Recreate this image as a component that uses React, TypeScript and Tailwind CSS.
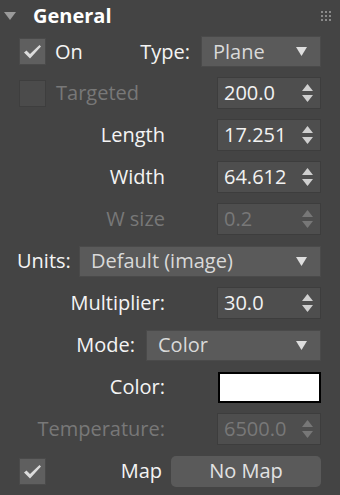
const FONT = { fontFamily: '"Open Sans", "Noto Sans", sans-serif' };

function Check({ disabled = false, checked = true }: { disabled?: boolean; checked?: boolean }) {
  return (
    <div
      className={`flex h-[27px] w-[27px] shrink-0 items-center justify-center border ${
        disabled ? "border-[#3e3e3e] bg-[#4b4b4b]" : "border-[#4a4a4a] bg-[#5f5f5f]"
      }`}
    >
      {checked && (
        <svg width="19" height="15" viewBox="0 0 19 15">
          <path d="M1 8.5 L3.5 6.5 L7 10 L16.5 1 L18 2.5 L7 14.5 Z" fill="#dcdcdc" />
        </svg>
      )}
    </div>
  );
}

function Arrow() {
  return (
    <svg width="11" height="9" viewBox="0 0 11 9" className="shrink-0">
      <path d="M0 0 H11 L5.5 9 Z" fill="#dedede" />
    </svg>
  );
}

function Spinner({ value, disabled = false }: { value: string; disabled?: boolean }) {
  return (
    <div className="ml-auto flex h-[32px] w-[104px] items-center border border-[#3d3d3d] bg-[#4e4e4e] pl-[6px] pr-[7px]">
      <span className={`flex-1 ${disabled ? "text-[#787878]" : "text-[#f2f2f2]"}`}>{value}</span>
      <svg width="11" height="19" viewBox="0 0 11 19" className="shrink-0">
        <path d="M0 7 L5.5 0 L11 7 Z" fill={disabled ? "#777777" : "#cfcfcf"} />
        <path d="M0 11 H11 L5.5 18 Z" fill={disabled ? "#777777" : "#cfcfcf"} />
      </svg>
    </div>
  );
}

function Dropdown({ value, width }: { value: string; width: string }) {
  return (
    <div className={`flex h-[31px] shrink-0 ${width} items-center border border-[#4a4a4a] bg-[#5a5a5a] pl-[11px] pr-[13px]`}>
      <span className="flex-1 text-[#d9d9d9]">{value}</span>
      <Arrow />
    </div>
  );
}

function Label({ children, disabled = false }: { children: React.ReactNode; disabled?: boolean }) {
  return (
    <div className={`w-[165px] shrink-0 text-right ${disabled ? "text-[#787878]" : "text-[#f4f4f4]"}`}>
      {children}
    </div>
  );
}

export default function App() {
  return (
    <div className="h-[495px] w-[340px] overflow-hidden bg-[#444444] text-[20px] leading-none" style={FONT}>
      <div className="flex h-[31px] items-center pl-[4px] pr-[9px]">
        <svg width="12" height="8" viewBox="0 0 12 8">
          <path d="M0 0 H12 L6 8 Z" fill="#9a9a9a" />
        </svg>
        <span className="ml-[17px] text-[20px] font-bold text-white">General</span>
        <div className="ml-auto grid grid-cols-3 gap-[2px]">
          {Array.from({ length: 9 }).map((_, i) => (
            <div key={i} className="h-[2px] w-[2px] bg-[#8a8a8a]" />
          ))}
        </div>
      </div>

      <div className="mt-[5px] flex flex-col gap-[10px] pr-[19px]">
        <div className="flex h-[31px] items-center pl-[19px]">
          <Check />
          <span className="ml-[9px] text-[#f4f4f4]">On</span>
          <span className="ml-auto mr-[11px] text-[#f4f4f4]">Type:</span>
          <Dropdown value="Plane" width="w-[120px]" />
        </div>

        <div className="flex h-[32px] items-center pl-[19px]">
          <Check disabled checked={false} />
          <span className="ml-[10px] text-[#787878]">Targeted</span>
          <Spinner value="200.0" />
        </div>

        <div className="flex h-[32px] items-center">
          <Label>Length</Label>
          <Spinner value="17.251" />
        </div>

        <div className="flex h-[32px] items-center">
          <Label>Width</Label>
          <Spinner value="64.612" />
        </div>

        <div className="flex h-[32px] items-center">
          <Label disabled>W size</Label>
          <Spinner value="0.2" disabled />
        </div>

        <div className="flex h-[32px] items-center">
          <span className="ml-[17px] text-[#f4f4f4]">Units:</span>
          <span className="flex-1" />
          <Dropdown value="Default (image)" width="w-[242px]" />
        </div>

        <div className="flex h-[32px] items-center">
          <Label>Multiplier:</Label>
          <Spinner value="30.0" />
        </div>

        <div className="flex h-[32px] items-center">
          <span className="ml-auto mr-[11px] text-[#f4f4f4]">Mode:</span>
          <Dropdown value="Color" width="w-[175px]" />
        </div>

        <div className="flex h-[32px] items-center">
          <Label>Color:</Label>
          <div className="ml-auto h-[31px] w-[103px] border-2 border-black bg-white" />
        </div>

        <div className="flex h-[32px] items-center">
          <Label disabled>Temperature:</Label>
          <Spinner value="6500.0" disabled />
        </div>

        <div className="flex h-[32px] items-center pl-[19px]">
          <Check />
          <span className="ml-auto mr-[9px] text-[#f4f4f4]">Map</span>
          <div className="flex h-[31px] w-[150px] shrink-0 items-center justify-center rounded-[5px] bg-[#5a5a5a] text-[#e2e2e2]">
            No Map
          </div>
        </div>
      </div>
    </div>
  );
}
